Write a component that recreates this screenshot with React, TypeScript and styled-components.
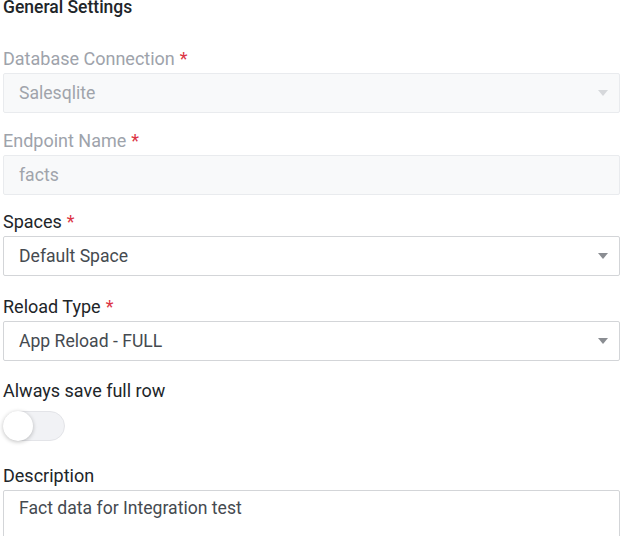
import styled, { createGlobalStyle } from "styled-components";

const GlobalStyle = createGlobalStyle`
  body {
    margin: 0;
    background: #fff;
    font-family: Roboto, "Noto Sans", sans-serif;
  }
`;

const Page = styled.div`
  width: 621px;
  height: 536px;
  overflow: hidden;
  padding-left: 3px;
  box-sizing: border-box;
`;

const Heading = styled.h3`
  margin: -3px 0 30px;
  font-size: 17.5px;
  line-height: 21px;
  font-weight: 500;
  color: #212529;
`;

const Field = styled.div<{ $space?: number }>`
  margin-bottom: ${(p) => p.$space ?? 18}px;
  width: 617px;
`;

const Label = styled.label<{ $disabled?: boolean; $gap?: number }>`
  display: block;
  margin-bottom: ${(p) => p.$gap ?? 4}px;
  font-size: 18px;
  line-height: 21px;
  font-weight: 400;
  color: ${(p) => (p.$disabled ? "#9ea3ab" : "#212529")};
`;

const Required = styled.span`
  color: #dc3545;
  margin-left: 5px;
`;

const Box = styled.div<{ $disabled?: boolean }>`
  display: flex;
  align-items: center;
  justify-content: space-between;
  height: 40px;
  box-sizing: border-box;
  padding: 0 11px 0 15px;
  border: 1px solid ${(p) => (p.$disabled ? "#e9ebee" : "#d3d5d8")};
  border-radius: 2px;
  background: ${(p) => (p.$disabled ? "#f8f9fa" : "#fff")};
  font-size: 17.6px;
  color: ${(p) => (p.$disabled ? "#a0a4ab" : "#454a50")};
`;

const TextArea = styled.div`
  height: 60px;
  box-sizing: border-box;
  padding: 6px 15px;
  border: 1px solid #d3d5d8;
  border-radius: 2px;
  font-size: 17.6px;
  line-height: 22px;
  color: #454a50;
`;

const Caret = ({ faded }: { faded?: boolean }) => (
  <svg width="10" height="6" viewBox="0 0 10 6">
    <path d="M0 0h10L5 6z" fill={faded ? "#d6d8db" : "#8a8d92"} />
  </svg>
);

const Track = styled.div<{ $on?: boolean }>`
  position: relative;
  width: 62px;
  height: 30px;
  box-sizing: border-box;
  border-radius: 15px;
  border: 1px solid #e3e4e8;
  background: ${(p) => (p.$on ? "#3b82f6" : "#f1f2f5")};
`;

const Knob = styled.span`
  position: absolute;
  top: -1px;
  left: -1px;
  width: 30px;
  height: 30px;
  border-radius: 50%;
  background: #fff;
  box-shadow: 0 1px 4px rgba(0, 0, 0, 0.25);
`;

type SelectProps = {
  label: string;
  value: string;
  disabled?: boolean;
  space?: number;
};

const SelectField = (props: SelectProps) => (
  <Field $space={props.space}>
    <Label $disabled={props.disabled}>
      {props.label}
      <Required>*</Required>
    </Label>
    <Box $disabled={props.disabled}>
      <span>{props.value}</span>
      <Caret faded={props.disabled} />
    </Box>
  </Field>
);

export default function App() {
  return (
    <>
      <GlobalStyle />
      <Page>
        <Heading>General Settings</Heading>
        <SelectField label="Database Connection" value="Salesqlite" disabled space={17} />
        <Field $space={16}>
          <Label $disabled>
            Endpoint Name<Required>*</Required>
          </Label>
          <Box $disabled>
            <span>facts</span>
          </Box>
        </Field>
        <SelectField label="Spaces" value="Default Space" space={20} />
        <SelectField label="Reload Type" value="App Reload - FULL" space={19} />
        <Field $space={24}>
          <Label $gap={10}>Always save full row</Label>
          <Track>
            <Knob />
          </Track>
        </Field>
        <Field>
          <Label>Description</Label>
          <TextArea>Fact data for Integration test</TextArea>
        </Field>
      </Page>
    </>
  );
}
